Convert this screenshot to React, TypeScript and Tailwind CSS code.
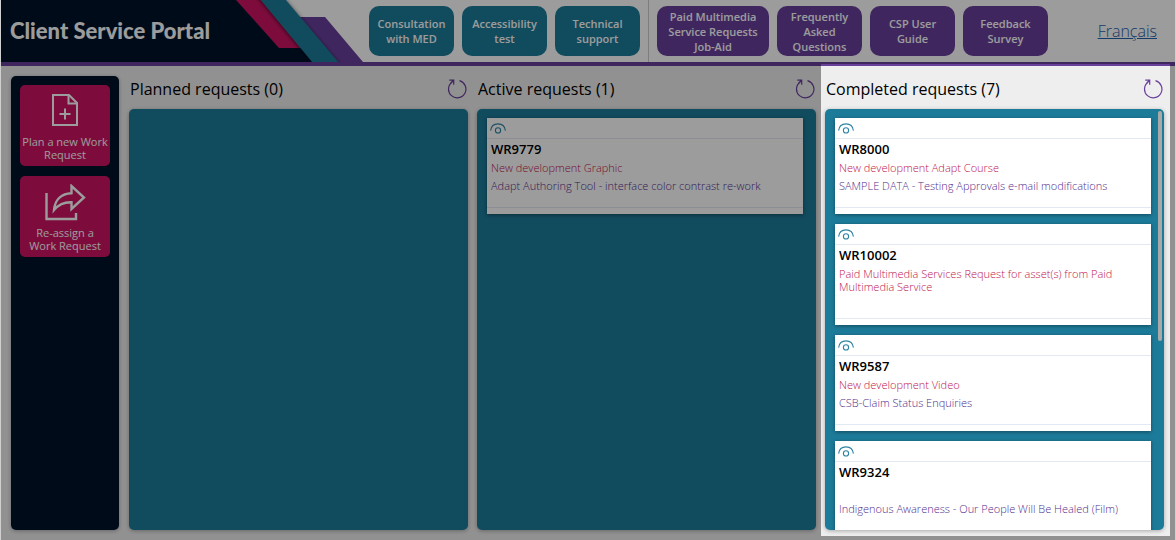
import React from "react";

type WorkRequest = { id: string; type?: string; description?: string };

const activeRequests: WorkRequest[] = [
  {
    id: "WR9779",
    type: "New development Graphic",
    description: "Adapt Authoring Tool - interface color contrast re-work",
  },
];

const completedRequests: WorkRequest[] = [
  {
    id: "WR8000",
    type: "New development Adapt Course",
    description: "SAMPLE DATA - Testing Approvals e-mail modifications",
  },
  {
    id: "WR10002",
    type: "Paid Multimedia Services Request for asset(s) from Paid Multimedia Service",
  },
  { id: "WR9587", type: "New development Video", description: "CSB-Claim Status Enquiries" },
  { id: "WR9324", description: "Indigenous Awareness - Our People Will Be Healed (Film)" },
];

function Banner() {
  return (
    <div className="relative h-[62px] w-[362px] shrink-0">
      <svg className="block" width="362" height="62" viewBox="0 0 362 62" aria-hidden="true">
        <defs>
          <filter id="soft" x="-20%" y="-20%" width="140%" height="140%">
            <feDropShadow dx="0" dy="1" stdDeviation="2" floodColor="#000" floodOpacity="0.7" />
          </filter>
        </defs>
        <polygon points="0,0 262,0 316,62 0,62" fill="#00132c" />
        <polygon points="235,0 264,0 304,48 278,48" fill="#cd1464" />
        <polygon points="295,17 324,17 362,62 330,62" fill="#693f9c" />
        <polygon points="254,-7 279,-7 343,69 317,69" fill="#1d7b9a" filter="url(#soft)" />
      </svg>
      <h1 className="absolute top-[16px] left-[9px] font-['Lato',sans-serif] text-[22px] leading-[30px] font-black whitespace-nowrap text-white">
        Client Service Portal
      </h1>
    </div>
  );
}

function TealButton({ children }: { children: React.ReactNode }) {
  return (
    <button className="h-[50px] w-[85px] rounded-[10px] bg-[#1d7b9a] px-1 text-[11px] leading-[15px] font-semibold text-white">
      {children}
    </button>
  );
}

function PurpleButton({ children, wide }: { children: React.ReactNode; wide?: boolean }) {
  return (
    <button
      className={
        (wide ? "w-[112px]" : "w-[85px]") +
        " h-[50px] rounded-[10px] bg-[#693f9c] px-2 text-[11px] leading-[15px] font-semibold text-white"
      }
    >
      {children}
    </button>
  );
}

function SideButton({ icon, children }: { icon: React.ReactNode; children: React.ReactNode }) {
  return (
    <button className="flex h-[81px] w-full flex-col items-center rounded-[5px] bg-[#cd1464] px-[2px] pt-2 text-[11px] leading-[13px] text-white">
      <span className="flex h-[42px] items-start">{icon}</span>
      <span>{children}</span>
    </button>
  );
}

function EyeIcon() {
  return (
    <svg width="16" height="11" viewBox="0 0 16 11" fill="none" stroke="#2e84a4" strokeWidth="1.1" aria-hidden="true">
      <path d="M0.6 7.6C1.1 3.6 4 0.9 8 0.9s6.9 2.7 7.4 6.7" />
      <circle cx="8" cy="7.4" r="2.6" />
    </svg>
  );
}

function RefreshIcon() {
  return (
    <svg width="20" height="20" viewBox="0 0 20 20" fill="none" stroke="#693f9c" strokeWidth="1.2" aria-hidden="true">
      <path d="M12.5 1.7A8.7 8.7 0 1 1 5.2 3" />
      <path d="M2.3 1.1H6.7V5.7M6.7 1.1L3.8 4" />
    </svg>
  );
}

function Card({ request }: { request: WorkRequest }) {
  return (
    <article className="shrink-0 bg-white pb-[6px] shadow-[0_1px_4px_rgba(0,0,0,0.4)]">
      <div className="flex h-[21px] items-start border-b border-[#e3e9f3] pt-[5px] pl-[3px]">
        <button aria-label={"View " + request.id}>
          <EyeIcon />
        </button>
      </div>
      <div className="border-b border-[#e3e9f3] px-1 pb-[15px]">
        <h3 className="pb-[1px] text-[13px] leading-[21px] font-semibold text-black">{request.id}</h3>
        <p className="mb-[5px] min-h-[13px] text-[11px] leading-[13px] font-light text-[#c0144c]">{request.type}</p>
        <p className="min-h-[5px] text-[11px] leading-[13px] font-light text-[#532d8c]">{request.description}</p>
      </div>
    </article>
  );
}

function Column({
  title,
  requests,
  scrolling,
  spotlight,
}: {
  title: string;
  requests: WorkRequest[];
  scrolling?: boolean;
  spotlight?: boolean;
}) {
  return (
    <section className="relative flex min-h-0 min-w-0 flex-1 flex-col">
      <div className="flex h-[43px] shrink-0 items-center justify-between pt-[3px] pr-px pl-px">
        <h2 className="text-[16px] leading-[22px] text-black">{title}</h2>
        <button aria-label={"Refresh " + title}>
          <RefreshIcon />
        </button>
      </div>
      <div className="relative flex min-h-0 flex-1 flex-col gap-[10px] overflow-hidden rounded-[5px] bg-[#1d7b9a] pt-[9px] pr-[13px] pl-[10px] shadow-[0_1px_4px_rgba(0,0,0,0.3)]">
        {requests.map((request) => (
          <Card key={request.id} request={request} />
        ))}
        {scrolling && <div className="absolute top-[2px] right-[2px] h-[230px] w-[4px] rounded-full bg-[#a9a9a9]" />}
      </div>
      {spotlight && (
        <div className="pointer-events-none absolute -top-[2px] -right-[6px] -bottom-[6px] -left-[4px] shadow-[0_0_0_2000px_rgba(0,0,0,0.39)]" />
      )}
    </section>
  );
}

export default function App() {
  return (
    <div className="flex h-screen min-h-[400px] flex-col overflow-hidden border-x border-[#d0d0d0] bg-[#eeeeee] font-['Open_Sans','Noto_Sans',sans-serif]">
      <header className="flex shrink-0 items-center border-b-4 border-[#693f9c] bg-white">
        <Banner />
        <nav className="flex shrink-0 items-center gap-2 pl-[6px]">
          <TealButton>Consultation with MED</TealButton>
          <TealButton>Accessibility test</TealButton>
          <TealButton>Technical support</TealButton>
          <span className="h-[62px] w-px bg-[#cccccc]" />
          <PurpleButton wide>Paid Multimedia Service Requests Job-Aid</PurpleButton>
          <PurpleButton>Frequently Asked Questions</PurpleButton>
          <PurpleButton>CSP User Guide</PurpleButton>
          <PurpleButton>Feedback Survey</PurpleButton>
        </nav>
        <a href="#fr" className="mr-[18px] ml-auto text-[16px] leading-[22px] font-light text-[#1f62ab] underline">
          Français
        </a>
      </header>
      <main className="flex min-h-0 flex-1 gap-[10px] pr-[11px] pb-[10px] pl-[10px]">
        <aside className="mt-[10px] flex w-[108px] shrink-0 flex-col gap-[10px] rounded-[5px] bg-[#00132c] px-[9px] pt-[9px] shadow-[0_1px_4px_rgba(0,0,0,0.3)]">
          <SideButton
            icon={
              <svg width="28" height="34" viewBox="0 0 28 34" fill="none" stroke="#fff" strokeWidth="2" aria-hidden="true">
                <path d="M2 2H18L26 10V32H2Z" />
                <path d="M17.5 2V10.5H26M14 15.5V26.5M8.5 21H19.5" />
              </svg>
            }
          >
            Plan a new Work Request
          </SideButton>
          <SideButton
            icon={
              <svg width="42" height="38" viewBox="0 0 42 38" fill="none" stroke="#fff" strokeWidth="2.4" aria-hidden="true">
                <path d="M2.5 9V35H32V29" />
                <path d="M10 26C11 15 18 9.500 27.5 9.2V2L40 13.5L27.5 25V18.2C20 18 14.5 20.5 10 26Z" />
              </svg>
            }
          >
            Re-assign a Work Request
          </SideButton>
        </aside>
        <div className="flex min-h-0 min-w-0 flex-1 gap-[9px]">
          <Column title="Planned requests (0)" requests={[]} />
          <Column title="Active requests (1)" requests={activeRequests} />
          <Column title="Completed requests (7)" requests={completedRequests} scrolling spotlight />
        </div>
      </main>
    </div>
  );
}
